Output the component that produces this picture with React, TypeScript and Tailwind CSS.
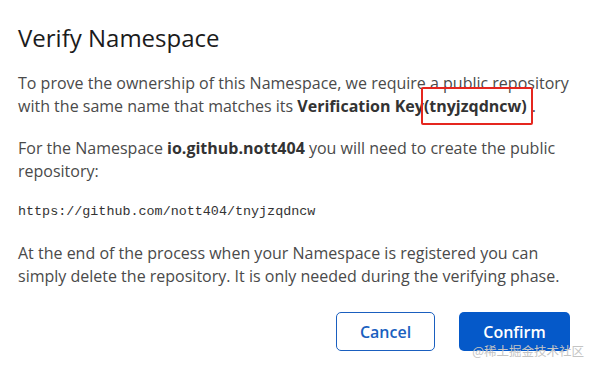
export default function App() {
  return (
    <div className="w-[590px] h-[365px] bg-white relative overflow-hidden" style={{ fontFamily: '"Open Sans", sans-serif' }}>
      <div className="px-[18px] pt-[22px]">
        <h1 className="text-[24px] leading-[32px] text-[#1b1b1b] mb-[18px]">Verify Namespace</h1>

        <p className="text-[16px] leading-[23px] text-[#4a4a4a]">
          To prove the ownership of this Namespace, we require a public repository with the same name that matches its{' '}
          <b className="font-bold text-[#333]">Verification Key</b>
          <span className="border-2 border-[#e5261f] rounded-[2px] -ml-[3px] mr-[-1px] pl-[1px] pr-[4px] py-[6px] font-bold text-[#333]">(tnyjzqdncw)</span>.
        </p>

        <p className="text-[16px] leading-[23px] text-[#4a4a4a] mt-[19px]">
          For the Namespace <b className="font-bold text-[#333]">io.github.nott404</b> you will need to create the public repository:
        </p>

        <p className="text-[13.4px] leading-[23px] text-[#333] mt-[17px]" style={{ fontFamily: '"Liberation Mono", monospace' }}>
          https://github.com/nott404/tnyjzqdncw
        </p>

        <p className="text-[16px] leading-[23px] text-[#4a4a4a] mt-[19px]">
          At the end of the process when your Namespace is registered you can simply delete the repository. It is only needed during the verifying phase.
        </p>

        <div className="flex justify-end gap-[24px] mt-[24px] pr-[2px]">
          <button className="w-[99px] h-[39px] border border-[#1a5fbf] rounded-[5px] text-[#1a5fbf] text-[16px] font-semibold">
            Cancel
          </button>
          <button className="w-[111px] h-[39px] bg-[#0559c9] rounded-[5px] text-white text-[16px] font-semibold">
            Confirm
          </button>
        </div>
      </div>
      <div className="absolute right-[6px] bottom-[4px] text-[12.5px] text-[#c4c4c4]" style={{ fontFamily: '"Noto Sans CJK SC", serif' }}>
        @稀土掘金技术社区
      </div>
    </div>
  );
}
